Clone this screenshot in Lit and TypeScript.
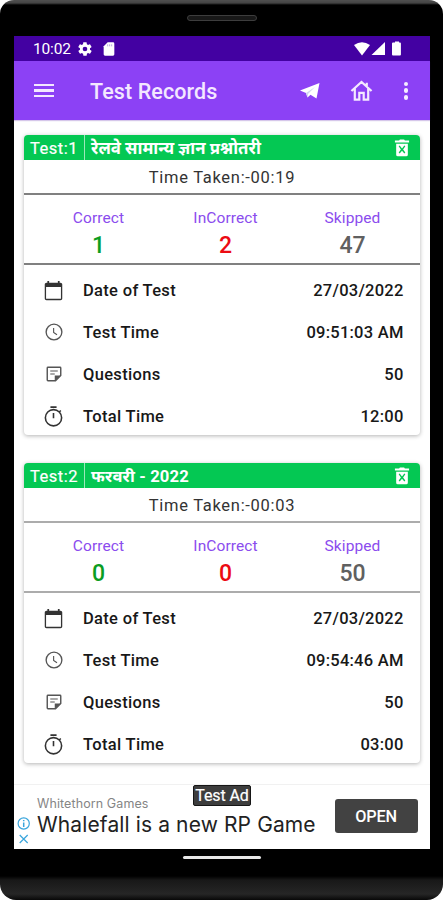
import { LitElement, html, svg, css } from "lit";
import { customElement, property } from "lit/decorators.js";

interface TestRecord {
  no: number;
  title: string;
  hindi: boolean;
  taken: string;
  correct: number;
  incorrect: number;
  skipped: number;
  date: string;
  time: string;
  questions: string;
  total: string;
}

const records: TestRecord[] = [
  { no: 1, title: "रेलवे सामान्य ज्ञान प्रश्नोतरी", hindi: true, taken: "00:19", correct: 1, incorrect: 2, skipped: 47, date: "27/03/2022", time: "09:51:03 AM", questions: "50", total: "12:00" },
  { no: 2, title: "फरवरी - 2022", hindi: false, taken: "00:03", correct: 0, incorrect: 0, skipped: 50, date: "27/03/2022", time: "09:54:46 AM", questions: "50", total: "03:00" },
];

const paths = {
  gear: svg`<path fill="currentColor" d="M19.4 13c.1-.3.1-.7.1-1s0-.7-.1-1l2.2-1.700c.2-.2.3-.5.1-.7l-2-3.500c-.1-.2-.4-.3-.6-.2l-2.600 1c-.5-.4-1.100-.8-1.700-1l-.4-2.700c0-.2-.2-.4-.5-.4h-4c-.2 0-.5.2-.5.4l-.4 2.700c-.6.2-1.200.6-1.700 1l-2.600-1c-.2-.1-.5 0-.6.2l-2 3.500c-.1.2-.1.5.1.7L4.500 11c0 .3-.1.700-.1 1s0 .7.100 1l-2.200 1.700c-.2.1-.2.400-.1.600l2 3.500c.1.200.4.300.6.200l2.600-1c.5.400 1.100.8 1.700 1l.4 2.700c0 .2.200.4.500.4h4c.2 0 .5-.2.5-.4l.4-2.700c.6-.3 1.200-.6 1.700-1l2.600 1c.2.100.5 0 .6-.2l2-3.500c.1-.2.100-.5-.1-.6zM12 15.500A3.500 3.500 0 1 1 12 8.500a3.500 3.500 0 0 1 0 7z"/>`,
  sd: svg`<path fill="currentColor" d="M18 2h-8L4 8v12c0 1.100.9 2 2 2h12a2 2 0 0 0 2-2V4a2 2 0 0 0-2-2z"/><path d="M10 5v3M13 5v3M16 5v3" stroke="#9a7bd0" stroke-width="1"/>`,
  calendar: svg`<path fill="currentColor" d="M20 3h-1V1h-2v2H7V1H5v2H4c-1.100 0-2 .9-2 2v16c0 1.100.9 2 2 2h16c1.100 0 2-.9 2-2V5c0-1.100-.9-2-2-2zm.5 18.500h-17V8h17z"/>`,
  clock: svg`<g fill="none" stroke="currentColor"><circle cx="12" cy="12" r="10.500" stroke-width="1.800"/><path stroke-width="1.500" d="M11.500 6.500v6l4.500 3.200"/></g>`,
  note: svg`<g fill="none" stroke="currentColor" stroke-width="1.900"><path d="M4 3h16a1 1 0 0 1 1 1v10l-7 7H4a1 1 0 0 1-1-1V4a1 1 0 0 1 1-1z"/><path stroke-width="1.500" d="M7 8h10M7 12h6"/></g><path fill="currentColor" d="M13 21v-7h8z"/>`,
  timer: svg`<g fill="none" stroke="currentColor" stroke-width="1.800"><path d="M8.500 1.300h7M12 8v6M18.600 6.900l1.700-1.700"/><circle cx="12" cy="13.400" r="9.300"/></g>`,
  trash: svg`<path fill="currentColor" fill-rule="evenodd" d="M5 7h14v13a2 2 0 0 1-2 2H7a2 2 0 0 1-2-2zM8 10l2.700 3.700L8 17.500l1.200 1.200 2.800-3.500 2.800 3.500 1.200-1.200-2.700-3.800L16 10l-1.200-1L12 12.500 9.200 9zM3.500 3h5l1-1.300h5l1 1.300h5v2.300h-17z"/>`,
  home: svg`<path fill="none" stroke="currentColor" stroke-width="2.300" d="M1.500 12.500 12 3l10.500 9.500M5 10v11.500h4.700v-7h4.600v7H19V10M17.500 4v4"/>`,
};

@customElement("ui-icon")
class UiIcon extends LitElement {
  @property() name: keyof typeof paths = "gear";
  static styles = css`
    :host { display: block; flex: none; }
    svg { display: block; width: 100%; height: 100%; }
  `;
  render() {
    return html`<svg viewBox="0 0 24 24">${paths[this.name]}</svg>`;
  }
}

@customElement("record-card")
class RecordCard extends LitElement {
  @property({ attribute: false }) record!: TestRecord;

  static styles = css`
    :host { display: block; height: 300px; border-radius: 4px; background: #fff; box-shadow: 0 1px 4px rgba(0, 0, 0, 0.3); color: #181818; }
    .head { display: flex; align-items: center; height: 25px; box-sizing: border-box; padding: 0 8px 0 6px; background: #04c853; border-radius: 4px 4px 0 0; color: #fff; }
    .no { width: 54px; font-size: 16.500px; letter-spacing: 0.5px; line-height: 25px; padding-top: 1px; height: 24px; border-right: 1.500px solid #9be8ba; -webkit-text-stroke: 0.2px #fff; white-space: nowrap; }
    .title { flex: 1; padding: 2px 0 0 6px; font: 700 16.600px/23px Roboto, "Noto Sans", "Noto Sans Devanagari", sans-serif; letter-spacing: 0.15px; white-space: nowrap; }
    .hindi { font-size: 16.800px; letter-spacing: 0; }
    .trash { width: 20px; height: 22px; }
    .taken { height: 33px; line-height: 35px; text-align: center; font-size: 16.500px; letter-spacing: 0.700px; color: #333; border-bottom: 2px solid #808080; }
    .stats { display: grid; grid-template-columns: repeat(3, 1fr); height: 70px; padding: 0 4px 0 11px; box-sizing: border-box; border-bottom: 2px solid #808080; text-align: center; }
    .light { border-bottom-color: #acacac; }
    .label { margin-top: 13px; height: 20px; line-height: 20px; font-size: 15.500px; letter-spacing: 0.1px; color: #8b4cee; }
    .value { height: 32px; line-height: 35px; font-size: 23px; font-weight: 500; }
    .green { color: #0a9d22; }
    .red { color: #ec0b13; }
    .grey { color: #606060; }
    .rows { padding: 4px 16px 0 19px; }
    .row { display: flex; align-items: center; height: 42.200px; font-size: 16.500px; font-weight: 500; }
    .icon { width: 21px; height: 21px; margin-right: 19px; color: #333; }
    .small { width: 18px; height: 18px; margin: 0 20.500px 0 1.500px; color: #555; }
    .name { flex: 1; letter-spacing: 0.32px; }
    .data { letter-spacing: 0.25px; margin-right: 0.4px; }
  `;

  row(icon: string, small: boolean, name: string, data: string) {
    return html`<div class="row"><ui-icon class="icon ${small ? "small" : ""}" name=${icon}></ui-icon><span class="name">${name}</span><span class="data">${data}</span></div>`;
  }

  render() {
    const r = this.record;
    const tone = r.no === 2 ? "light" : "";
    return html`
      <div class="head"><span class="no">Test:${r.no}</span><span class="title ${r.hindi ? "hindi" : ""}">${r.title}</span><ui-icon class="trash" name="trash"></ui-icon></div>
      <div class="taken ${tone}">Time Taken:-${r.taken}</div>
      <div class="stats ${tone}">
        <div><div class="label">Correct</div><div class="value green">${r.correct}</div></div>
        <div><div class="label">InCorrect</div><div class="value red">${r.incorrect}</div></div>
        <div><div class="label">Skipped</div><div class="value grey">${r.skipped}</div></div>
      </div>
      <div class="rows">
        ${this.row("calendar", false, "Date of Test", r.date)}
        ${this.row("clock", true, "Test Time", r.time)}
        ${this.row("note", true, "Questions", r.questions)}
        ${this.row("timer", false, "Total Time", r.total)}
      </div>`;
  }
}

@customElement("app-root")
class AppRoot extends LitElement {
  static styles = css`
    :host { display: block; width: 443px; height: 900px; background: #fff; font-family: Roboto, "Noto Sans", sans-serif; overflow: hidden; }
    .phone { display: flex; flex-direction: column; height: 900px; box-sizing: border-box; padding: 0 13px 0 14px; border-radius: 14px 14px 16px 16px; background: linear-gradient(#505050 0, #444 3px, #000 5px, #000 876px, #181818 880px, #262626 894px, #080808 900px); }
    .top { height: 36px; display: flex; justify-content: center; }
    .speaker { width: 70px; height: 6px; box-sizing: border-box; margin-top: 15px; border: 1px solid #3d3d3d; border-radius: 3px; background: #181818; }
    .screen { height: 813px; background: #fff; display: flex; flex-direction: column; }
    .status { height: 25px; background: #4301a2; color: #fff; display: flex; align-items: center; padding: 0 28px 0 19px; }
    .clock { width: 43px; font-size: 15.500px; line-height: 25px; padding-top: 1px; letter-spacing: -0.15px; }
    .gear { width: 16px; height: 16px; margin: 0 8px 0 1px; }
    .sd { width: 16px; height: 16px; margin-top: 1px; }
    .space { flex: 1; }
    .signals { width: 48px; height: 15px; }
    .bar { height: 59px; background: #8c41f5; color: #f3e8ff; display: flex; align-items: center; padding: 0 20px; box-shadow: 0 1px 1px rgba(90, 30, 170, 0.25); z-index: 1; }
    .menu { width: 20px; height: 14px; display: flex; flex-direction: column; justify-content: space-between; margin-right: 36px; }
    .menu i { height: 2.400px; background: #f3e8ff; }
    h1 { margin: 3px 0 0; flex: 1; font-size: 21.500px; font-weight: 500; letter-spacing: 0.1px; line-height: 30px; }
    .plane { width: 20px; height: 18px; }
    .home { width: 23px; height: 23px; margin: 0 0 0 30px; }
    .dots { width: 5px; height: 18px; margin: 0 1.500px 0 31px; display: flex; flex-direction: column; justify-content: space-between; }
    .dots i { height: 4.600px; width: 4.600px; border-radius: 50%; background: #f6edff; }
    .list { height: 664px; box-sizing: border-box; padding: 15px 10px 0; display: flex; flex-direction: column; gap: 28px; }
    .ad { position: relative; height: 65px; box-sizing: border-box; border-top: 1px solid #f1f1f1; background: #fff; display: flex; padding: 0 12px 0 3px; }
    .marks { width: 13px; height: 30px; margin-top: 32px; }
    .copy { flex: 1; padding: 11px 0 0 7px; white-space: nowrap; }
    .by { font: 400 12.500px/16px Inter, sans-serif; letter-spacing: 0.1px; color: #858585; }
    .line { font: 400 21px/25px Inter, sans-serif; color: #222; letter-spacing: 0.12px; }
    .badge { position: absolute; left: 179px; top: 0; width: 58px; height: 21px; box-sizing: border-box; background: #3d3d3d; border: 1px solid #161616; border-radius: 2px; color: #fff; text-align: center; font-size: 16px; line-height: 20px; letter-spacing: -0.1px; -webkit-text-stroke: 0.2px #fff; white-space: nowrap; }
    .open { width: 83px; height: 34px; margin-top: 14px; border-radius: 3px; background: #424242; color: #fff; font-size: 16.300px; font-weight: 500; line-height: 35px; text-align: center; letter-spacing: -0.2px; text-indent: -1px; }
    .nav { width: 78px; height: 3px; margin: 7px auto 0; border-radius: 2px; background: #e8e8e8; }
  `;

  render() {
    return html`
      <div class="phone">
        <div class="top"><div class="speaker"></div></div>
        <div class="screen">
          <div class="status">
            <span class="clock">10:02</span><ui-icon class="gear" name="gear"></ui-icon><ui-icon class="sd" name="sd"></ui-icon>
            <span class="space"></span>
            <svg class="signals" viewBox="0 0 48 15" fill="#fff"><path d="M0 4Q8 -1.500 16 4L8 14.500z"/><path d="M31 1v13H17.500z"/><path d="M39 1.500h2V.5h4v1h1q.9 0 .9.900V13.500q0 1-.9 1h-7q-1 0-1-1V2.400q0-.9 1-.9z"/></svg>
          </div>
          <div class="bar">
            <div class="menu"><i></i><i></i><i></i></div>
            <h1>Test Records</h1>
            <svg class="plane" viewBox="0 0 20 18"><path fill="#fff" d="M0 8.500 19.500 1 16.500 16.500 10.500 12.700 7.500 15.500 6 11z"/><path fill="#cfd5ee" d="M6 11 15 5 8.200 11.800 7.500 15.500z"/></svg>
            <ui-icon class="home" name="home"></ui-icon>
            <div class="dots"><i></i><i></i><i></i></div>
          </div>
          <div class="list">${records.map((r) => html`<record-card .record=${r}></record-card>`)}</div>
          <div class="ad">
            <svg class="marks" viewBox="0 0 13 30" fill="none" stroke="#39a5dc" stroke-width="1.200"><circle cx="6.700" cy="6.500" r="5.600"/><path d="M6.700 5.500v4.500M6.700 3v1.300" stroke-width="1.500"/><path d="m2.700 18 8 8m0-8-8 8"/></svg>
            <div class="copy"><div class="by">Whitethorn Games</div><div class="line">Whalefall is a new RP Game</div></div>
            <div class="open">OPEN</div>
            <div class="badge">Test Ad</div>
          </div>
        </div>
        <div class="nav"></div>
      </div>`;
  }
}
